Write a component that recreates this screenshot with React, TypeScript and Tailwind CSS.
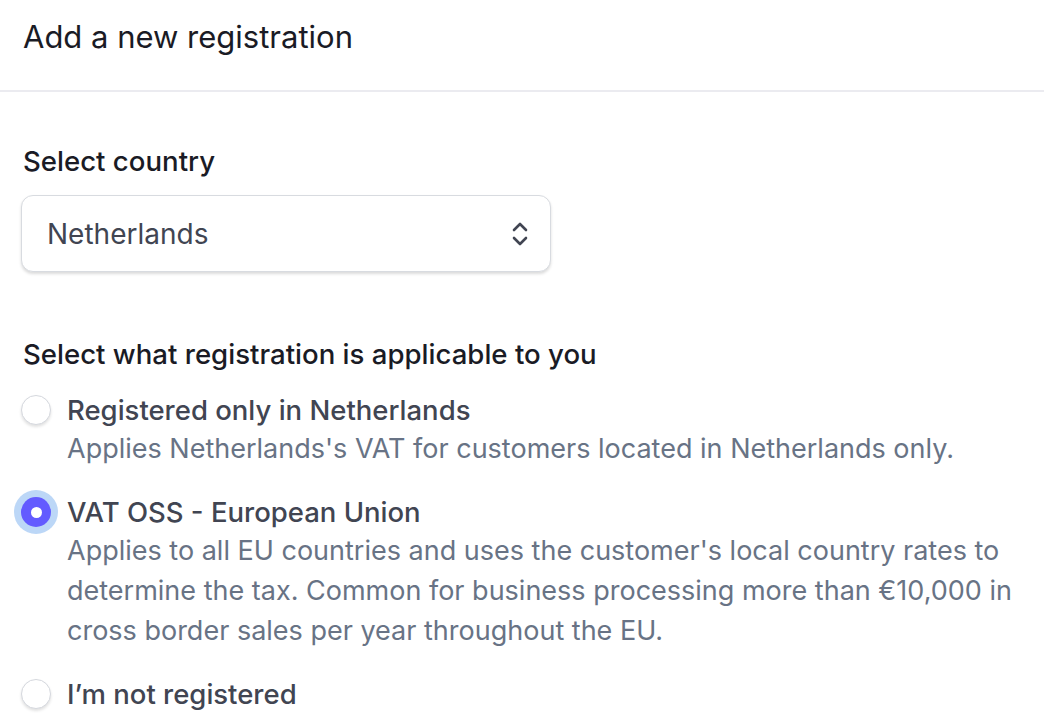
import React from "react";

const options = [
  {
    id: "local",
    title: "Registered only in Netherlands",
    description:
      "Applies Netherlands's VAT for customers located in Netherlands only.",
  },
  {
    id: "oss",
    title: "VAT OSS - European Union",
    description:
      "Applies to all EU countries and uses the customer's local country rates to determine the tax. Common for business processing more than €10,000 in cross border sales per year throughout the EU.",
  },
  {
    id: "none",
    title: "I’m not registered",
    description: "",
  },
];

function Radio({ checked }: { checked: boolean }) {
  if (checked) {
    return (
      <span className="flex h-[30px] w-[30px] shrink-0 items-center justify-center rounded-full bg-[#635bff] shadow-[0_0_0_7px_#bcd7f7]">
        <span className="h-[11px] w-[11px] rounded-full bg-white" />
      </span>
    );
  }
  return (
    <span className="h-[30px] w-[30px] shrink-0 rounded-full border border-[#d5d8de] bg-white shadow-[0_2px_3px_rgba(0,0,0,0.12)]" />
  );
}

export default function App() {
  const selected = "oss";

  return (
    <div className="min-h-[726px] w-[1044px] overflow-hidden bg-white font-['Inter',sans-serif] antialiased">
      <div className="h-[92px] border-b-2 border-[#ebebf0] px-[23px] pt-[17px]">
        <h1 className="text-[31px] leading-[40px] text-[#1a1b25]">
          Add a new registration
        </h1>
      </div>

      <div className="px-[21px]">
        <div className="mt-[51px] px-[2px] text-[27.6px] font-medium leading-[36px] text-[#1a1b25]">
          Select country
        </div>

        <div className="mt-[16px] flex h-[77px] w-[530px] items-center justify-between rounded-[12px] border border-[#d8dbe0] bg-white pl-[25px] pr-[20px] shadow-[0_2px_3px_rgba(0,0,0,0.14)]">
          <span className="text-[28px] leading-[36px] text-[#414552]">
            Netherlands
          </span>
          <svg
            width="20"
            height="28"
            viewBox="0 0 20 28"
            fill="none"
            stroke="#414552"
            strokeWidth="2.6"
            strokeLinecap="round"
            strokeLinejoin="round"
          >
            <path d="M4 10 L10 4 L16 10" />
            <path d="M4 18 L10 24 L16 18" />
          </svg>
        </div>

        <div className="mt-[64px] px-[2px] text-[27.6px] font-medium leading-[36px] text-[#1a1b25]">
          Select what registration is applicable to you
        </div>

        <div className="mt-[19px] flex flex-col gap-[24px]">
          {options.map((o) => (
            <div key={o.id} className="flex items-start gap-[16px]">
              <div className="flex h-[38px] items-center">
                <Radio checked={o.id === selected} />
              </div>
              <div className="flex flex-col">
                <span className="text-[27.5px] font-medium leading-[38px] text-[#414552]">
                  {o.title}
                </span>
                {o.description && (
                  <span className="text-[27px] leading-[40px] text-[#687385]">
                    {o.description}
                  </span>
                )}
              </div>
            </div>
          ))}
        </div>
      </div>
    </div>
  );
}
